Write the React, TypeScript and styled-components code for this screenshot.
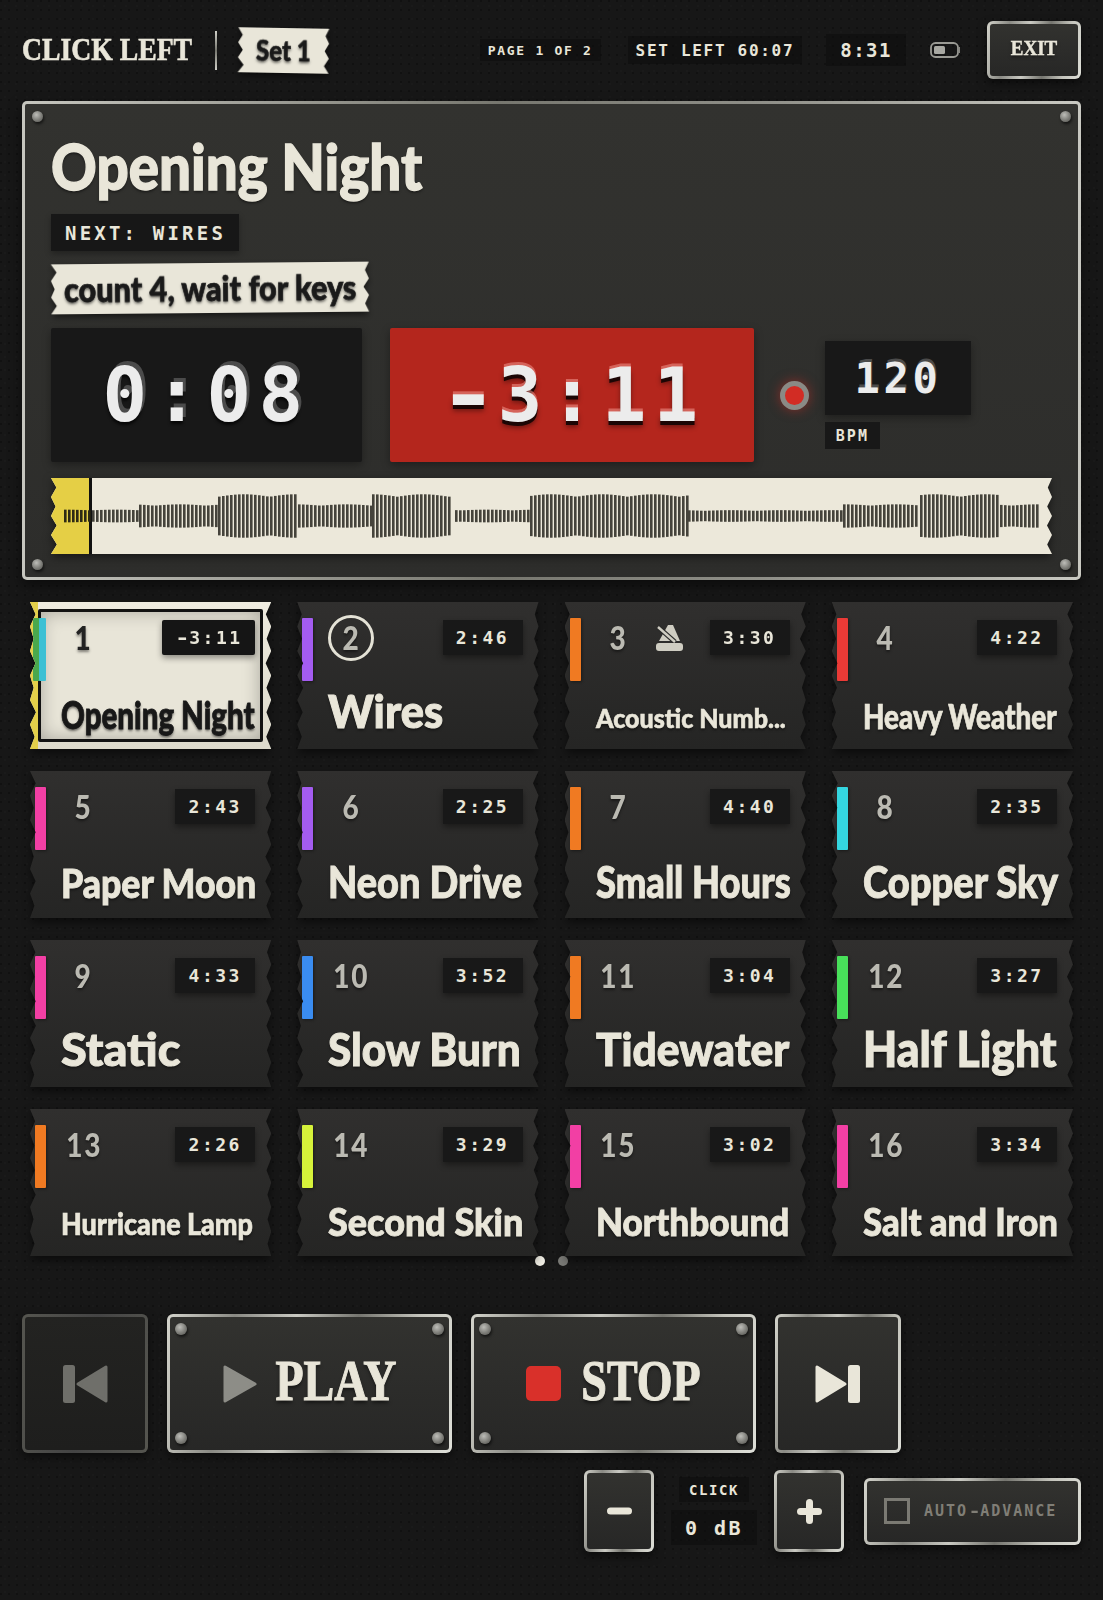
import React, { useLayoutEffect, useRef, useState } from 'react';
import styled, { createGlobalStyle } from 'styled-components';

const mono = `"DejaVu Sans Mono", "Liberation Mono", monospace`;
const hand = `Lato, "Open Sans", sans-serif`;
const stencil = `"Liberation Serif", serif`;
const cream = '#e9e6d9';
const metal =
  'linear-gradient(100deg, #d4d4cc 0%, #8a8a84 22%, #c9c9c2 42%, #75756f 62%, #c4c4bc 82%, #dedfd8 100%)';

const GlobalStyle = createGlobalStyle`
  html, body {
    margin: 0;
    padding: 0;
    background: #171717;
  }
`;

// zigzag left and right edges, like a strip of torn tape
const tornEdges = (teeth: number, depth: number, seed: number) => {
  const wob = (i: number) => {
    const v = Math.sin(i * 12.9898 + seed * 78.233) * 43758.5453;
    return v - Math.floor(v);
  };
  const pts: string[] = [];
  for (let i = 0; i <= teeth * 2; i++) {
    const y = (i / (teeth * 2)) * 100;
    const out = i % 2 === 0 ? 0 : depth * (0.7 + wob(i) * 0.5);
    pts.push(`calc(100% - ${out.toFixed(1)}px) ${y.toFixed(1)}%`);
  }
  for (let i = teeth * 2; i >= 0; i--) {
    const y = (i / (teeth * 2)) * 100;
    const out = i % 2 === 0 ? 0 : depth * (0.7 + wob(i + 40) * 0.5);
    pts.push(`${out.toFixed(1)}px ${y.toFixed(1)}%`);
  }
  return `polygon(${pts.join(', ')})`;
};

const Page = styled.div`
  box-sizing: border-box;
  width: 1103px;
  height: 1600px;
  padding: 21px 22px 0;
  overflow: hidden;
  background-color: #171717;
  background-image:
    radial-gradient(circle at 1px 1px, rgba(0, 0, 0, 0.28) 1px, transparent 1.4px),
    radial-gradient(circle at 5px 6px, rgba(255, 255, 255, 0.012) 1px, transparent 1.4px);
  background-size: 8px 9px, 11px 13px;
`;

/* header */
const Header = styled.header`
  display: flex;
  align-items: center;
  height: 58px;
  margin-bottom: 22px;
`;

const Brand = styled.div`
  font-family: ${stencil};
  font-weight: 700;
  font-size: 27.7px;
  color: ${cream};
  white-space: nowrap;
  transform: scaleY(1.12);
  -webkit-text-stroke: 0.5px ${cream};
`;

const Divider = styled.div`
  width: 2px;
  height: 39px;
  margin: 0 21px 0 23px;
  background: linear-gradient(180deg, #cfcfc8, #77776f 50%, #cfcfc8);
`;

const StatusGroup = styled.div`
  display: flex;
  align-items: center;
  gap: 24px;
  margin-left: auto;
`;

const Chip = styled.div<{ $size: number; $spacing: number; $height: number; $pad: number }>`
  display: flex;
  align-items: center;
  justify-content: center;
  height: ${(p) => p.$height}px;
  padding: 0 ${(p) => p.$pad}px;
  background: rgba(10, 10, 10, 0.4);
  font-family: ${mono};
  font-weight: 700;
  font-size: ${(p) => p.$size}px;
  letter-spacing: ${(p) => p.$spacing}px;
  color: ${cream};
  white-space: pre;
`;

const PageChip = styled(Chip)`
  margin-right: 3px;
`;

const MetalButton = styled.button<{ $dim?: boolean }>`
  position: relative;
  display: flex;
  align-items: center;
  justify-content: center;
  box-sizing: border-box;
  padding: 0;
  border: 3px solid transparent;
  border-radius: 6px;
  background:
    linear-gradient(180deg, #32322f, #272726) padding-box,
    ${metal} border-box;
  box-shadow: 0 4px 10px rgba(0, 0, 0, 0.55);
  color: ${cream};
  ${(p) =>
    p.$dim &&
    `
    background:
      linear-gradient(180deg, #232321, #1e1e1d) padding-box,
      linear-gradient(100deg, #55554f, #444, #55554f) border-box;
  `}
`;

const ExitButton = styled(MetalButton)`
  width: 94px;
  height: 58px;
  font-family: ${stencil};
  font-weight: 700;
  font-size: 19px;
`;

const Stretched = styled.span<{ $y: number; $gap?: number; $stroke: number }>`
  display: inline-block;
  transform: scaleY(${(p) => p.$y});
  margin-left: ${(p) => p.$gap ?? 0}px;
  margin-top: -4px;
  -webkit-text-stroke: ${(p) => p.$stroke}px ${cream};
  text-shadow: 0 2px 3px rgba(0, 0, 0, 0.5);
`;

const Icon = styled.svg`
  display: block;
  flex: none;
`;

const BatteryIcon = styled(Icon)`
  margin-right: 3px;
`;

// the dash of the mono face in the picture is wider than this one's
const Dash = styled.span`
  display: inline-block;
  margin: 0 0.1em;
  letter-spacing: 0;
  transform: scaleX(1.35);
`;

/* hand-lettered text, squeezed to the width of the lettering */
const FitBox = styled.span<{ $w: number }>`
  display: inline-block;
  width: ${(p) => p.$w}px;
  white-space: nowrap;
`;

const HandText = styled.span<{ $size: number; $color: string }>`
  display: inline-block;
  font-family: ${hand};
  font-weight: 900;
  font-size: ${(p) => p.$size}px;
  line-height: 1;
  color: ${(p) => p.$color};
  -webkit-text-stroke: ${(p) => (p.$size * 0.022).toFixed(2)}px ${(p) => p.$color};
  transform-origin: left center;
  text-shadow: 0 2px 3px rgba(0, 0, 0, 0.55);
`;

const FitText: React.FC<{ w: number; size: number; color?: string; children: string }> = ({
  w,
  size,
  color = cream,
  children,
}) => {
  const ref = useRef<HTMLSpanElement>(null);
  const [scale, setScale] = useState(1);
  useLayoutEffect(() => {
    if (ref.current) setScale(w / ref.current.offsetWidth);
  }, [w, children]);
  return (
    <FitBox $w={w}>
      <HandText ref={ref} $size={size} $color={color} style={{ transform: `scaleX(${scale})` }}>
        {children}
      </HandText>
    </FitBox>
  );
};

const TapeShadow = styled.div<{ $tilt: number }>`
  display: inline-block;
  filter: drop-shadow(0 3px 3px rgba(0, 0, 0, 0.55));
  transform: rotate(${(p) => p.$tilt}deg);
`;

const Tape = styled.div<{ $clip: string; $height: number; $pad: number }>`
  display: flex;
  align-items: center;
  height: ${(p) => p.$height}px;
  padding: 0 ${(p) => p.$pad}px;
  background: ${cream};
  clip-path: ${(p) => p.$clip};
`;

/* now playing panel */
const Panel = styled.section`
  position: relative;
  box-sizing: border-box;
  height: 479px;
  padding: 27px 26px 0;
  border: 3px solid transparent;
  border-radius: 5px;
  background:
    linear-gradient(180deg, #32322f, #2d2d2b) padding-box,
    linear-gradient(90deg, #c6c6bf, #77776f 45%, #8f8f88 70%, #c9c9c2) border-box;
  box-shadow: 0 6px 14px rgba(0, 0, 0, 0.5);
`;

const Rivet = styled.span<{ $size: number; $x: string; $y: string }>`
  position: absolute;
  ${(p) => p.$x};
  ${(p) => p.$y};
  width: ${(p) => p.$size}px;
  height: ${(p) => p.$size}px;
  border-radius: 50%;
  background: radial-gradient(circle at 40% 35%, #bdbdb8, #7d7d78 55%, #50504c);
  box-shadow: 1px 2px 3px rgba(0, 0, 0, 0.6);
`;

const TitleRow = styled.div`
  height: 70px;
  margin-bottom: 13px;
  display: flex;
  align-items: center;
`;

const NextChip = styled.div`
  display: flex;
  align-items: center;
  width: fit-content;
  height: 37px;
  padding: 0 13px 0 14px;
  margin-bottom: 12px;
  background: #171717;
  box-shadow: 0 3px 6px rgba(0, 0, 0, 0.3);
  font-family: ${mono};
  font-weight: 700;
  font-size: 19px;
  letter-spacing: 3.2px;
  color: ${cream};
`;

const TimerRow = styled.div`
  display: flex;
  align-items: center;
  margin-top: 15px;
`;

const TimerBox = styled.div<{ $red?: boolean }>`
  display: flex;
  align-items: center;
  justify-content: center;
  width: ${(p) => (p.$red ? 364 : 311)}px;
  height: 134px;
  margin-right: ${(p) => (p.$red ? 26 : 28)}px;
  border-radius: 2px;
  background: ${(p) => (p.$red ? '#b4261d' : '#181818')};
  box-shadow: 0 3px 8px rgba(0, 0, 0, 0.35);
  font-family: ${mono};
  font-weight: 700;
  font-size: 74px;
  letter-spacing: 7.4px;
  color: #ececec;
  text-shadow: ${(p) =>
    p.$red
      ? '0 -3px 0 rgba(240,150,140,0.55), 0 4px 0 #1c0605, 0 6px 5px rgba(0,0,0,0.4)'
      : '3px -4px 0 #4b4b4b, 0 3px 3px rgba(0,0,0,0.7)'};
`;

const Led = styled.div`
  box-sizing: border-box;
  width: 29px;
  height: 29px;
  margin-right: 16px;
  border: 5px solid #8a8a85;
  border-radius: 50%;
  background: #d22c24;
  box-shadow: 0 0 12px rgba(210, 44, 36, 0.55);
`;

const BpmColumn = styled.div`
  display: flex;
  flex-direction: column;
  align-items: flex-start;
  gap: 7px;
`;

const BpmValue = styled.div`
  display: flex;
  align-items: center;
  justify-content: center;
  width: 146px;
  height: 74px;
  background: #181818;
  box-shadow: 0 3px 8px rgba(0, 0, 0, 0.35);
  font-family: ${mono};
  font-weight: 700;
  font-size: 42px;
  letter-spacing: 3.7px;
  color: #ececec;
  text-shadow: 1px -3px 0 #4b4b4b;
`;

const BpmLabel = styled.div`
  display: flex;
  align-items: center;
  justify-content: center;
  width: 55px;
  height: 27px;
  background: #181818;
  font-family: ${mono};
  font-weight: 700;
  font-size: 15px;
  letter-spacing: 2.2px;
  color: ${cream};
`;

const WaveShadow = styled.div`
  margin-top: 16px;
  filter: drop-shadow(0 3px 4px rgba(0, 0, 0, 0.5));
`;

const WaveStrip = styled.div<{ $clip: string }>`
  position: relative;
  height: 76px;
  background: #ece8da;
  clip-path: ${(p) => p.$clip};
`;

const WaveProgress = styled.div`
  position: absolute;
  left: 0;
  top: 0;
  bottom: 0;
  width: 38px;
  background: #e5cf45;
  border-right: 3px solid #111;
`;

const WaveSvg = styled.svg`
  position: relative;
  display: block;
`;

/* song grid */
const Grid = styled.div`
  display: grid;
  grid-template-columns: repeat(4, minmax(0, 1fr));
  grid-auto-rows: 147px;
  gap: 22px 26px;
  margin-top: 22px;
  padding: 0 8px;
`;

const Ticket = styled.div`
  filter: drop-shadow(0 4px 4px rgba(0, 0, 0, 0.5));
`;

const TicketFace = styled.div<{ $clip: string; $active: boolean }>`
  position: relative;
  display: flex;
  flex-direction: column;
  justify-content: space-between;
  box-sizing: border-box;
  height: 147px;
  padding: 18px 16px 0 31px;
  clip-path: ${(p) => p.$clip};
  background: ${(p) =>
    p.$active
      ? 'linear-gradient(90deg, #e3cf4a 0, #e3cf4a 8px, transparent 8px), linear-gradient(180deg, #eeebdf, #dcd9cb)'
      : 'linear-gradient(180deg, #302f2e, #252524)'};
`;

const ActiveFrame = styled.div`
  position: absolute;
  inset: 7px 8px 7px 8px;
  border: 3px solid #111;
  border-radius: 2px;
  background: #e8e5d8;
  box-shadow: inset 0 0 18px rgba(0, 0, 0, 0.28);
`;

const Stripe = styled.div<{ $color: string; $active: boolean }>`
  position: absolute;
  left: ${(p) => (p.$active ? 9 : 5)}px;
  top: 16px;
  width: ${(p) => (p.$active ? 7 : 11)}px;
  height: 63px;
  border-radius: 1px;
  background: ${(p) => p.$color};
  box-shadow: ${(p) => (p.$active ? '-6px 0 0 #4aa84d' : '1px 1px 3px rgba(0,0,0,0.4)')};
`;

const TicketTop = styled.div`
  position: relative;
  display: flex;
  align-items: center;
  height: 35px;
`;

const SongNumber = styled.div<{ $ring: boolean; $active: boolean }>`
  display: flex;
  align-items: center;
  justify-content: center;
  box-sizing: border-box;
  width: 46px;
  height: 46px;
  flex: none;
  border-radius: 50%;
  border: ${(p) => (p.$ring ? `3px solid #e4e2d6` : '3px solid transparent')};
  font-family: ${hand};
  font-weight: 900;
  font-size: 33px;
  line-height: 1;
  letter-spacing: 2px;
  color: ${(p) => (p.$active ? '#222' : '#bbbab2')};
  text-shadow: 0 2px 3px rgba(0, 0, 0, 0.45);
`;

const NumberGlyphs = styled.span`
  display: inline-block;
  transform: scaleX(0.85);
`;

const MuteIcon = styled(Icon)`
  margin-left: 13px;
`;

const TimeChip = styled.div<{ $active: boolean }>`
  display: flex;
  align-items: center;
  justify-content: center;
  margin-left: auto;
  width: ${(p) => (p.$active ? 93 : 80)}px;
  height: 35px;
  border-radius: ${(p) => (p.$active ? 2 : 0)}px;
  background: ${(p) => (p.$active ? '#151515' : '#181818')};
  box-shadow: 0 3px 6px rgba(0, 0, 0, 0.4);
  font-family: ${mono};
  font-weight: 700;
  font-size: 18px;
  letter-spacing: 2.5px;
  color: ${cream};
`;

const NameRow = styled.div<{ $bottom: number }>`
  position: relative;
  margin-bottom: ${(p) => p.$bottom}px;
`;

const Dots = styled.div`
  display: flex;
  justify-content: center;
  gap: 13px;
`;

const Dot = styled.span<{ $on?: boolean }>`
  width: 10px;
  height: 10px;
  border-radius: 50%;
  background: ${(p) => (p.$on ? '#f0eee4' : '#7a7a76')};
`;

/* transport */
const Transport = styled.div`
  display: flex;
  gap: 19px;
  margin-top: 48px;
`;

const SkipButton = styled(MetalButton)`
  width: 126px;
  height: 139px;
`;

const BigButton = styled(MetalButton)`
  gap: 0;
  width: 285px;
  height: 139px;
  font-family: ${stencil};
  font-weight: 700;
  font-size: 46px;
`;

const ExtrasRow = styled.div`
  display: flex;
  align-items: center;
  justify-content: flex-end;
  margin-top: 17px;
`;

const StepButton = styled(MetalButton)`
  width: 70px;
  height: 82px;
`;

const ClickColumn = styled.div`
  display: flex;
  flex-direction: column;
  align-items: center;
  gap: 8px;
  width: 120px;
`;

const AutoAdvance = styled(MetalButton)`
  justify-content: flex-start;
  gap: 14px;
  width: 217px;
  height: 67px;
  margin-left: 20px;
  padding-left: 17px;
`;

const AutoLabel = styled.span`
  font-family: ${mono};
  font-weight: 700;
  font-size: 15px;
  letter-spacing: 2px;
  color: #807e76;
  white-space: nowrap;
`;

const CheckBox = styled.span`
  flex: none;
  box-sizing: border-box;
  width: 26px;
  height: 26px;
  border: 3px solid #7b7a73;
`;

type Song = {
  n: number;
  name: string;
  time: string;
  color: string;
  w: number;
  size: number;
};

const songs: Song[] = [
  { n: 1, name: 'Opening Night', time: '3:11', color: '#3cc0d4', w: 194, size: 38 },
  { n: 2, name: 'Wires', time: '2:46', color: '#a45cf0', w: 115, size: 46 },
  { n: 3, name: 'Acoustic Numb...', time: '3:30', color: '#f07a22', w: 190, size: 27 },
  { n: 4, name: 'Heavy Weather', time: '4:22', color: '#ea3a36', w: 194, size: 34 },
  { n: 5, name: 'Paper Moon', time: '2:43', color: '#f23fa4', w: 195, size: 40 },
  { n: 6, name: 'Neon Drive', time: '2:25', color: '#a45cf0', w: 194, size: 43 },
  { n: 7, name: 'Small Hours', time: '4:40', color: '#f07a22', w: 195, size: 43 },
  { n: 8, name: 'Copper Sky', time: '2:35', color: '#34d6e0', w: 195, size: 43 },
  { n: 9, name: 'Static', time: '4:33', color: '#f23fa4', w: 119, size: 46 },
  { n: 10, name: 'Slow Burn', time: '3:52', color: '#3a8cf0', w: 193, size: 46 },
  { n: 11, name: 'Tidewater', time: '3:04', color: '#f07a22', w: 193, size: 46 },
  { n: 12, name: 'Half Light', time: '3:27', color: '#48e05a', w: 194, size: 49 },
  { n: 13, name: 'Hurricane Lamp', time: '2:26', color: '#f07a22', w: 192, size: 30 },
  { n: 14, name: 'Second Skin', time: '3:29', color: '#d6f23a', w: 195, size: 38 },
  { n: 15, name: 'Northbound', time: '3:02', color: '#f23fa4', w: 193, size: 38 },
  { n: 16, name: 'Salt and Iron', time: '3:34', color: '#f23fa4', w: 195, size: 37 },
];

// [from x, to x, bar height] of each loud or quiet stretch of the track
const waveParts: [number, number, number][] = [
  [13, 88, 12],
  [88, 167, 22],
  [167, 247, 41],
  [247, 321, 22],
  [321, 401, 41],
  [404, 479, 12],
  [479, 637, 41],
  [637, 792, 11],
  [792, 869, 22],
  [869, 949, 41],
  [949, 987, 22],
];

const waveBars = waveParts.flatMap(([from, to, h]) => {
  const bars: { x: number; h: number }[] = [];
  for (let x = from; x < to - 1; x += 4) {
    const jitter = Math.abs(Math.sin(x * 7.13)) * 0.12 - 0.06;
    bars.push({ x, h: h * (1 + jitter) });
  }
  return bars;
});

const RoundFill: React.FC<{ d: string; color: string }> = ({ d, color }) => (
  <path d={d} fill={color} stroke={color} strokeWidth={3} strokeLinejoin="round" />
);

const cornerRivets = (size: number, a: number, b: number) => (
  <>
    <Rivet $size={size} $x={`left: ${a}px`} $y={`top: ${b}px`} />
    <Rivet $size={size} $x={`right: ${a}px`} $y={`top: ${b}px`} />
    <Rivet $size={size} $x={`left: ${a}px`} $y={`bottom: ${b}px`} />
    <Rivet $size={size} $x={`right: ${a}px`} $y={`bottom: ${b}px`} />
  </>
);

const App: React.FC = () => {
  return (
    <Page>
      <GlobalStyle />
      <Header>
        <Brand>CLICK LEFT</Brand>
        <Divider />
        <TapeShadow $tilt={1}>
          <Tape $clip={tornEdges(3, 5, 2)} $height={45} $pad={18}>
            <FitText w={55} size={28} color="#1a1a1a">
              Set 1
            </FitText>
          </Tape>
        </TapeShadow>
        <StatusGroup>
          <PageChip $size={13} $spacing={1.7} $height={22} $pad={8}>
            PAGE 1 OF 2
          </PageChip>
          <Chip $size={16} $spacing={1.7} $height={28} $pad={8}>
            SET LEFT 60:07
          </Chip>
          <Chip $size={19} $spacing={1.5} $height={32} $pad={14}>
            8:31
          </Chip>
          <BatteryIcon width="30" height="16" viewBox="0 0 30 16">
            <rect x="1" y="1" width="27" height="14" rx="4.5" fill="none" stroke="#9a9a94" strokeWidth="1.8" />
            <rect x="4" y="4" width="11" height="8" rx="1.5" fill="#a8a8a2" />
            <rect x="28.6" y="5" width="1.4" height="6" fill="#85857f" />
          </BatteryIcon>
          <ExitButton>
            <Stretched $y={1.1} $stroke={0.4}>
              EXIT
            </Stretched>
          </ExitButton>
        </StatusGroup>
      </Header>

      <Panel>
        {cornerRivets(11, 7, 7)}
        <TitleRow>
          <FitText w={371} size={62}>
            Opening Night
          </FitText>
        </TitleRow>
        <NextChip>NEXT: WIRES</NextChip>
        <TapeShadow $tilt={-0.5}>
          <Tape $clip={tornEdges(3, 5, 5)} $height={50} $pad={13}>
            <FitText w={292} size={34} color="#1a1a1a">
              count 4, wait for keys
            </FitText>
          </Tape>
        </TapeShadow>
        <TimerRow>
          <TimerBox>0:08</TimerBox>
          <TimerBox $red>
            <span>
              <Dash>-</Dash>3:11
            </span>
          </TimerBox>
          <Led />
          <BpmColumn>
            <BpmValue>120</BpmValue>
            <BpmLabel>BPM</BpmLabel>
          </BpmColumn>
        </TimerRow>
        <WaveShadow>
          <WaveStrip $clip={tornEdges(4, 5, 9)}>
            <WaveProgress />
            <WaveSvg width="1001" height="76" viewBox="0 0 1001 76">
              {waveBars.map((b) => (
                <rect
                  key={b.x}
                  x={b.x}
                  y={38 - b.h / 2}
                  width={2.6}
                  height={b.h}
                  fill={b.x < 38 ? '#2e2a14' : '#45433b'}
                />
              ))}
            </WaveSvg>
          </WaveStrip>
        </WaveShadow>
      </Panel>

      <Grid>
        {songs.map((s) => {
          const active = s.n === 1;
          return (
            <Ticket key={s.n}>
              <TicketFace $clip={tornEdges(6, 5, s.n)} $active={active}>
                {active && <ActiveFrame />}
                <Stripe $color={s.color} $active={active} />
                <TicketTop>
                  <SongNumber $ring={s.n === 2} $active={active}>
                    <NumberGlyphs>{s.n}</NumberGlyphs>
                  </SongNumber>
                  {s.n === 3 && (
                    <MuteIcon width="29" height="27" viewBox="0 0 29 27">
                      <path d="M13 1h5l7 16H4z" fill="#cfcdc2" />
                      <path d="M3 3l17 15" stroke="#2a2a29" strokeWidth="5" />
                      <path d="M3 3l17 15" stroke="#cfcdc2" strokeWidth="2.4" />
                      <rect x="1" y="19" width="27" height="8" rx="3" fill="#cfcdc2" />
                    </MuteIcon>
                  )}
                  <TimeChip $active={active}>
                    <span>
                      {active && <Dash>-</Dash>}
                      {s.time}
                    </span>
                  </TimeChip>
                </TicketTop>
                <NameRow $bottom={20 - 0.113 * s.size}>
                  <FitText w={s.w} size={s.size} color={active ? '#181818' : cream}>
                    {s.name}
                  </FitText>
                </NameRow>
              </TicketFace>
            </Ticket>
          );
        })}
      </Grid>
      <Dots>
        <Dot $on />
        <Dot />
      </Dots>

      <Transport>
        <SkipButton $dim>
          <Icon width="46" height="40" viewBox="0 0 46 40">
            <rect x="1" y="1" width="12" height="38" rx="2.5" fill="#6f6f6a" />
            <RoundFill d="M44 3v34L16 20z" color="#6f6f6a" />
          </Icon>
        </SkipButton>
        <BigButton>
          {cornerRivets(12, 5, 6)}
          <Icon width="34" height="40" viewBox="0 0 34 40">
            <RoundFill d="M2 3v34l30-17z" color="#8d8d87" />
          </Icon>
          <Stretched $y={1.22} $gap={19} $stroke={0.9}>
            PLAY
          </Stretched>
        </BigButton>
        <BigButton>
          {cornerRivets(12, 5, 6)}
          <Icon width="35" height="35" viewBox="0 0 35 35">
            <rect width="35" height="35" rx="5" fill="#d9302a" />
          </Icon>
          <Stretched $y={1.22} $gap={20} $stroke={0.9}>
            STOP
          </Stretched>
        </BigButton>
        <SkipButton>
          <Icon width="46" height="40" viewBox="0 0 46 40">
            <RoundFill d="M2 3v34l28-17z" color="#e9e6d9" />
            <rect x="33" y="1" width="12" height="38" rx="2.5" fill="#e9e6d9" />
          </Icon>
        </SkipButton>
      </Transport>

      <ExtrasRow>
        <StepButton>
          <Icon width="25" height="8" viewBox="0 0 25 8">
            <rect width="25" height="7" y="0.5" rx="3.5" fill="#e9e6d9" />
          </Icon>
        </StepButton>
        <ClickColumn>
          <Chip $size={14} $spacing={1.6} $height={25} $pad={10}>
            CLICK
          </Chip>
          <Chip $size={20} $spacing={2.5} $height={35} $pad={14}>
            0 dB
          </Chip>
        </ClickColumn>
        <StepButton>
          <Icon width="25" height="25" viewBox="0 0 25 25">
            <rect x="9" width="7" height="25" rx="3.5" fill="#e9e6d9" />
            <rect y="9" width="25" height="7" rx="3.5" fill="#e9e6d9" />
          </Icon>
        </StepButton>
        <AutoAdvance>
          <CheckBox />
          <AutoLabel>
            AUTO<Dash>-</Dash>ADVANCE
          </AutoLabel>
        </AutoAdvance>
      </ExtrasRow>
    </Page>
  );
};

export default App;
